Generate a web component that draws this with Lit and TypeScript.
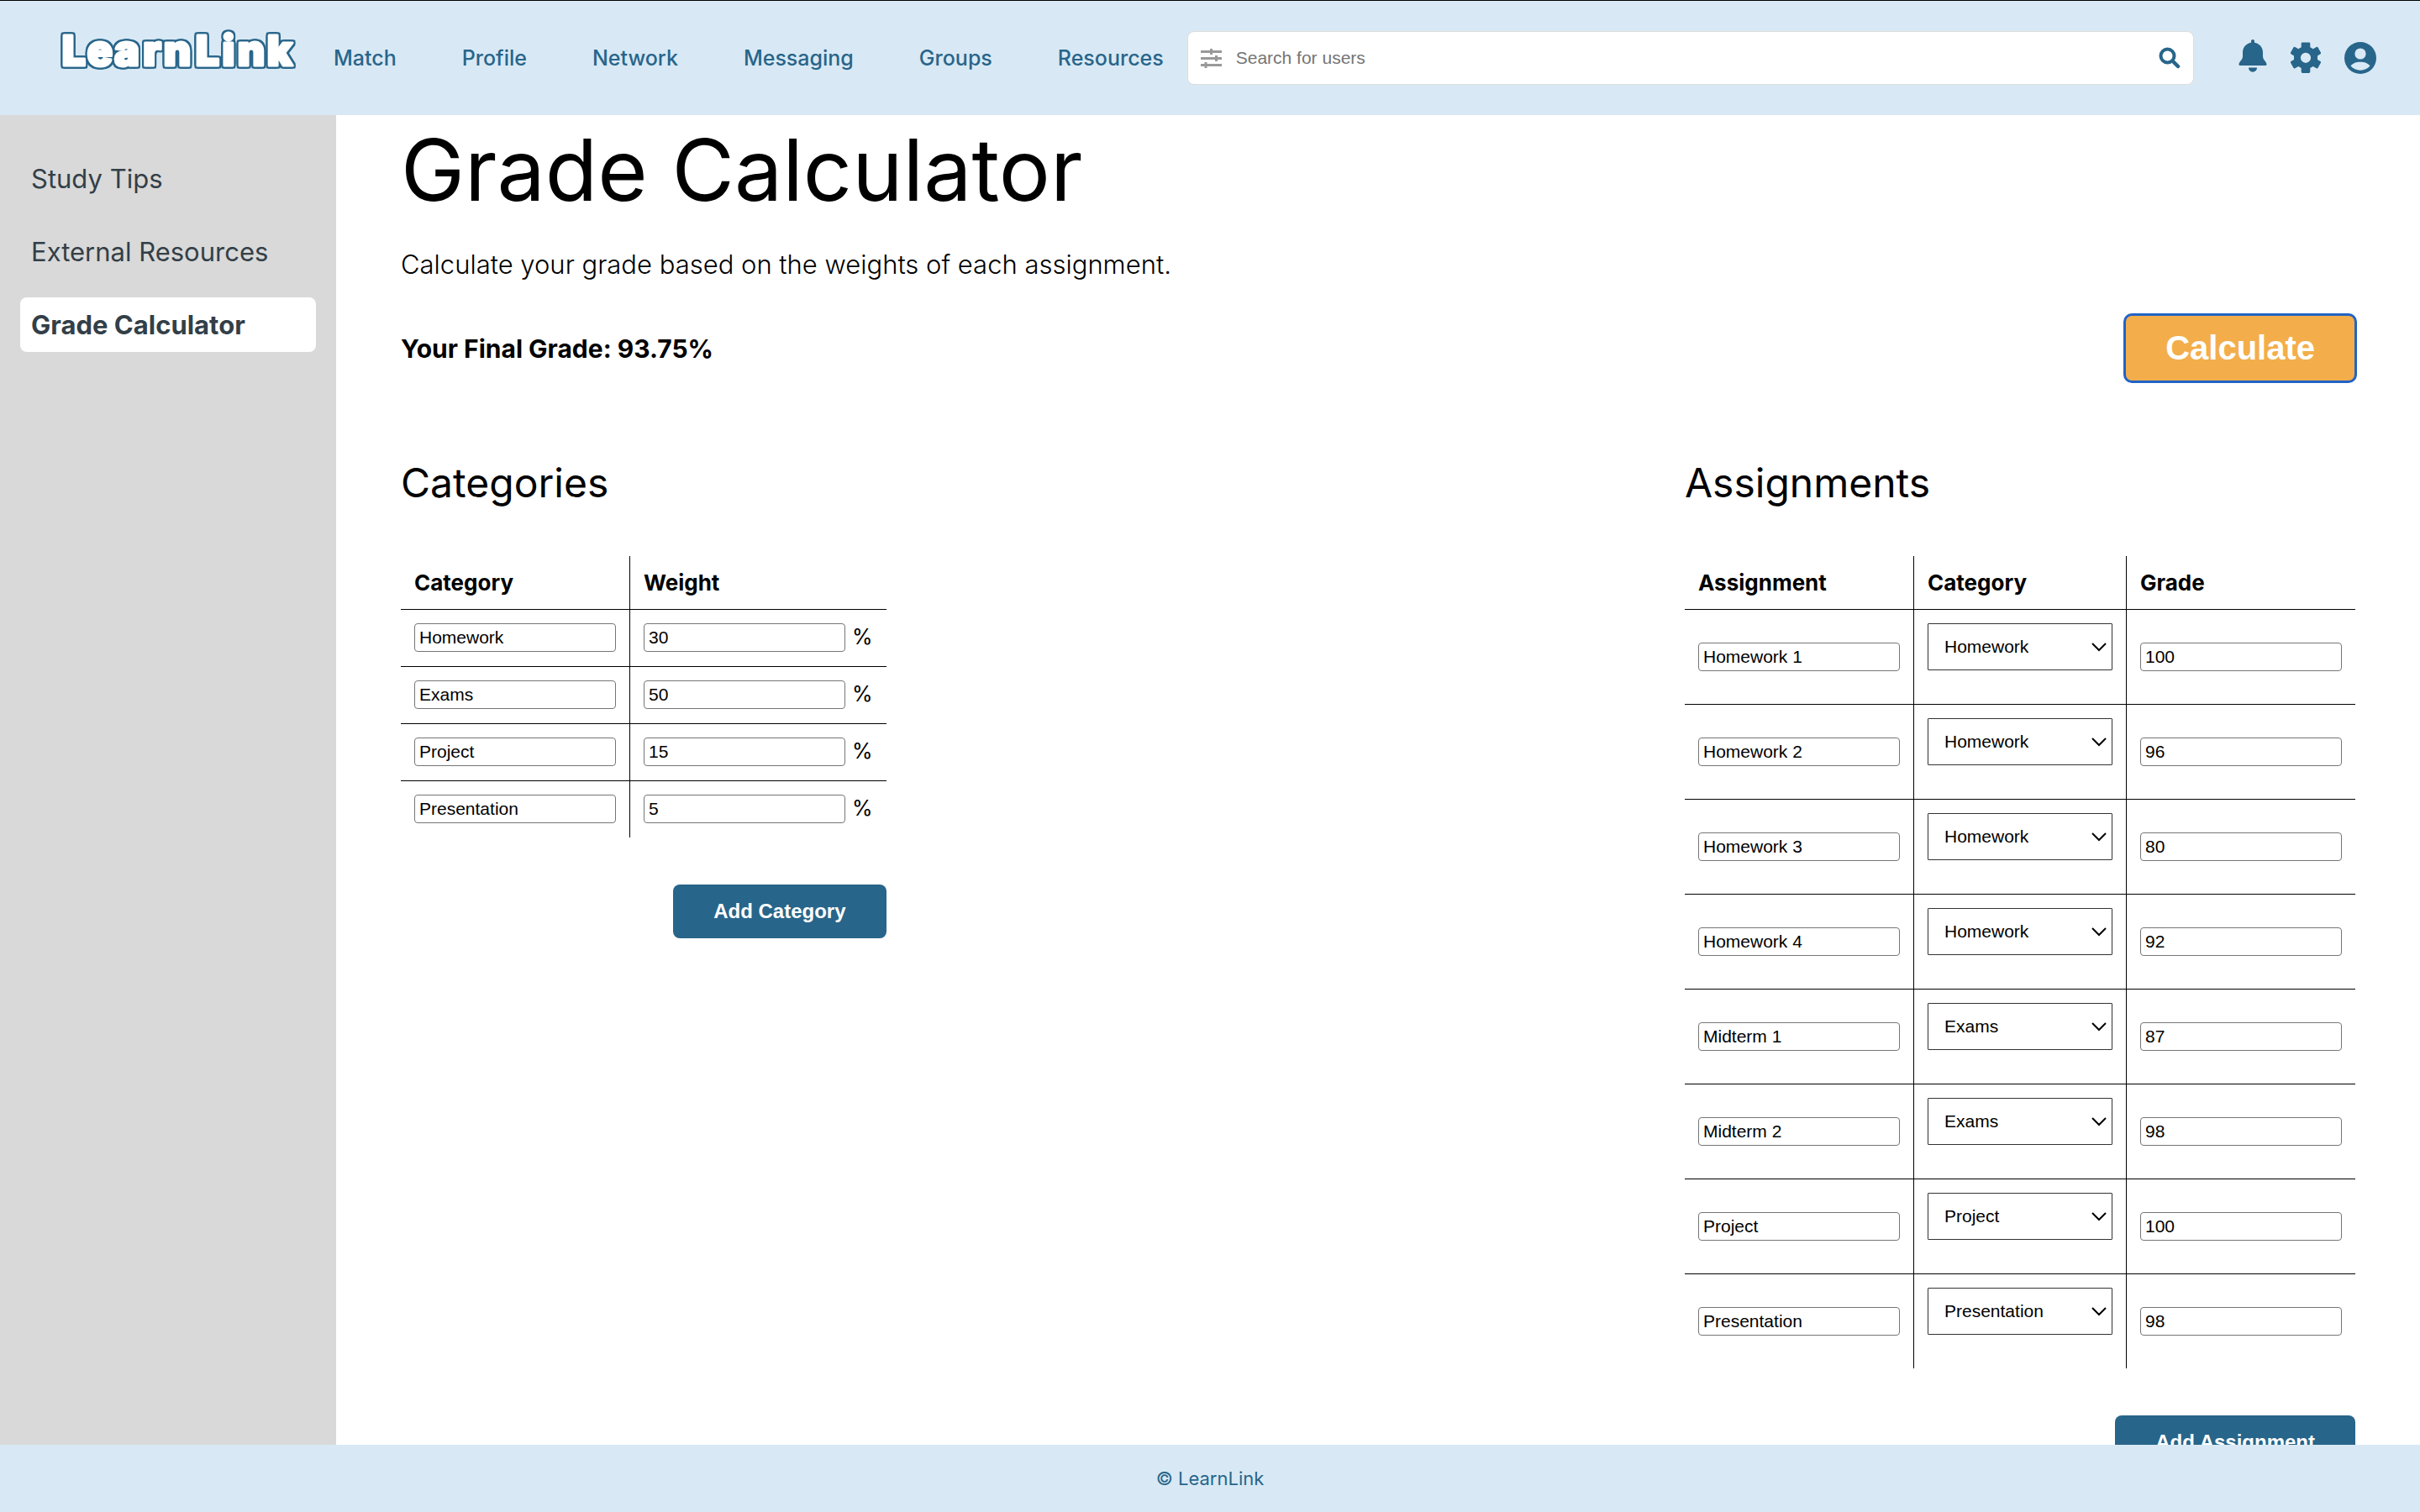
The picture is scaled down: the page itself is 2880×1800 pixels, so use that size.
import { LitElement, html, svg, css } from "lit";
import { customElement, state } from "lit/decorators.js";

interface Category {
  name: string;
  weight: number;
}

interface Assignment {
  name: string;
  category: string;
  grade: number;
}

const icons = {
  filter: svg`<path d="M0 4.500h25M0 12.500h25M0 20.500h25M12.500 1v7M18.500 9v7M6 17v7" fill="none" stroke="#999" stroke-width="3"/>`,
  search: svg`<circle cx="10.500" cy="10.500" r="8" fill="none" stroke="currentColor" stroke-width="4"/><path d="M17.500 17.500l5.500 5.500" stroke="currentColor" stroke-width="4.500" stroke-linecap="round"/>`,
  bell: svg`<path d="M17 0c1.200 0 2 .9 2 2.200v1.600C25.300 5 29 9.500 29 15.500v4.500c0 4.500 4.500 6.500 4.500 9.500 0 1-.7 1.500-1.500 1.500H2c-.8 0-1.500-.5-1.500-1.500 0-3 4.500-5 4.500-9.500v-4.500C5 9.500 8.700 5 15 3.800V2.200C15 .9 15.800 0 17 0zM12 33.500h10c0 3-2.200 5.200-5 5.200s-5-2.200-5-5.200z" fill="currentColor"/>`,
  gear: svg`<path fill-rule="evenodd" d="M14.200.6h7.600c.9 0 1.500.5 1.500 1.400v4.300c1.300.5 2.400 1.200 3.400 2l4-2.300c.7-.4 1.400-.2 1.900.5l3.300 6c.4.700.2 1.400-.5 1.800L32 16.500v4.500l3.400 2c.7.400.9 1.100.5 1.800l-3.300 6c-.5.700-1.200.9-1.900.5l-4-2.300c-1 .8-2.100 1.500-3.400 2v4.500c0 .9-.6 1.400-1.500 1.400h-7.600c-.9 0-1.500-.5-1.500-1.400V31c-1.300-.5-2.400-1.200-3.400-2l-4 2.300c-.7.400-1.400.2-1.900-.5l-3.300-6c-.4-.7-.2-1.400.5-1.800L4 21v-4.500l-3.400-2.200c-.7-.4-.9-1.100-.5-1.800l3.300-6c.5-.7 1.200-.9 1.900-.5l4 2.300c1-.8 2.100-1.500 3.400-2V2c0-.9.600-1.400 1.500-1.400zM18 12.700a6.100 6.100 0 1 0 0 12.200 6.100 6.100 0 0 0 0-12.200z" fill="currentColor"/>`,
  user: svg`<circle cx="19" cy="19" r="19" fill="currentColor"/><circle cx="19" cy="14" r="6.600" fill="#d8e9f5"/><path d="M7.500 28.500c3-3.600 6.500-4.800 11.500-4.800s8.500 1.200 11.500 4.800c-3 3.400-6.900 5.200-11.500 5.200s-8.500-1.800-11.500-5.200z" fill="#d8e9f5"/>`,
  chevron: svg`<path d="M1 2l8 8 8-8" fill="none" stroke="#000" stroke-width="2"/>`,
};

/* Letters of the bubble wordmark with the centre of each one. */
const wordmark: [string, number][] = [
  ["L", 16],
  ["e", 47],
  ["a", 79],
  ["r", 109],
  ["n", 139],
  ["L", 175],
  ["i", 200],
  ["n", 227],
  ["k", 261],
];

@customElement("app-root")
export class AppRoot extends LitElement {
  static styles = css`
    :host {
      display: flex;
      flex-direction: column;
      height: 100vh;
      overflow: hidden;
      box-sizing: border-box;
      border-top: 1px solid #000;
      background: #fff;
      color: #000;
      font-family: Inter, "Liberation Sans", sans-serif;
      font-size: 26px;
    }
    * {
      box-sizing: border-box;
    }
    h1, h2, p {
      margin: 0;
      font-weight: 400;
    }
    a {
      color: inherit;
      text-decoration: none;
    }
    svg {
      display: block;
    }
    .header {
      display: flex;
      flex: none;
      align-items: center;
      height: 136px;
      padding: 0 52px 0 72px;
      background: #d8e9f5;
      color: #28658a;
    }
    .logo {
      flex: none;
      width: 325px;
      padding-bottom: 18px;
    }
    .logo svg {
      overflow: visible;
    }
    .logo text {
      fill: #fff;
      stroke: #fff;
      stroke-width: 3px;
      stroke-linejoin: round;
      text-anchor: middle;
      font-size: 50px;
      font-weight: 900;
      filter: drop-shadow(2px 0 0 #28658a) drop-shadow(-2px 0 0 #28658a)
        drop-shadow(0 2px 0 #28658a) drop-shadow(0 -2px 0 #28658a);
    }
    .nav {
      display: flex;
      gap: 78px;
      font-size: 25px;
      font-weight: 500;
    }
    .search {
      display: flex;
      flex: 1;
      align-items: center;
      gap: 16px;
      height: 64px;
      margin-left: 28px;
      padding: 0 15px;
      border: 1px solid #ddd;
      border-radius: 8px;
      background: #fff;
    }
    .search input {
      flex: 1;
      min-width: 0;
      padding: 0;
      border: 0;
      outline: 0;
      background: none;
      font: 21px "Liberation Sans", Arial, sans-serif;
    }
    .search input::placeholder {
      color: #757575;
    }
    .icon-button {
      padding: 0;
      border: 0;
      background: none;
      color: #28658a;
    }
    .actions {
      display: flex;
      align-items: center;
      gap: 28px;
      margin-left: 53px;
    }
    .body {
      display: flex;
      flex: 1;
      min-height: 0;
    }
    .sidebar {
      display: flex;
      flex: none;
      flex-direction: column;
      gap: 22px;
      width: 400px;
      padding: 43px 24px;
      background: #d9d9d9;
      color: #333f48;
      font-size: 31px;
    }
    .side-link {
      padding: 0 13px;
      border-radius: 8px;
      line-height: 65px;
    }
    .side-link.active {
      background: #fff;
      font-weight: 700;
    }
    .main {
      flex: 1;
      min-width: 0;
      overflow: hidden;
      padding: 0 77px;
    }
    .title {
      font-size: 102px;
      line-height: 130px;
    }
    .subtitle {
      margin-top: 28px;
      font-size: 31px;
      font-weight: 300;
      line-height: 40px;
    }
    .result {
      display: flex;
      align-items: center;
      justify-content: space-between;
      margin-top: 40px;
    }
    .grade {
      font-size: 30px;
      font-weight: 700;
    }
    .calculate {
      height: 79px;
      padding: 0 48px;
      border: 0;
      border-radius: 8px;
      outline: 3px solid #2163c6;
      outline-offset: -1px;
      background: #f3ae4b;
      color: #fff;
      font: 700 40px "Liberation Sans", Arial, sans-serif;
    }
    .columns {
      display: flex;
      align-items: flex-start;
      justify-content: space-between;
      margin-top: 91px;
    }
    .panel {
      display: flex;
      flex-direction: column;
      align-items: flex-end;
    }
    .panel-title {
      align-self: flex-start;
      margin-bottom: 57px;
      font-size: 48px;
      line-height: 60px;
    }
    .table {
      border-collapse: collapse;
    }
    .table th {
      height: 63px;
      padding: 0 16px;
      font-weight: 700;
      text-align: left;
    }
    .table td {
      height: 68px;
      padding: 16px;
    }
    .table tbody td {
      border-top: 1px solid #000;
    }
    .table th + th,
    .table td + td {
      border-left: 1px solid #000;
    }
    .field {
      display: block;
      width: 240px;
      height: 34px;
      padding: 0 5px;
      border: 1px solid #767676;
      border-radius: 4px;
      background: #fff;
      color: #000;
      font: 21px "Liberation Sans", Arial, sans-serif;
    }
    .weight {
      display: flex;
      align-items: flex-start;
      gap: 8px;
      font-size: 25px;
      line-height: 32px;
    }
    .select-wrap {
      display: grid;
      align-items: center;
      margin-bottom: 24px;
    }
    .select-wrap > * {
      grid-area: 1 / 1;
    }
    .select-wrap svg {
      justify-self: end;
      margin-right: 7px;
      pointer-events: none;
    }
    .select {
      width: 220px;
      height: 56px;
      padding: 0 19px;
      border: 1px solid #333;
      border-radius: 1px;
      appearance: none;
      background: #fff;
      color: #000;
      font: 21px "Liberation Sans", Arial, sans-serif;
    }
    .add {
      height: 64px;
      margin-top: 56px;
      padding: 0 48px;
      border: 0;
      border-radius: 8px;
      background: #28658a;
      color: #fff;
      font: 700 24px "Liberation Sans", Arial, sans-serif;
    }
    .footer {
      display: flex;
      flex: none;
      align-items: center;
      justify-content: center;
      height: 80px;
      background: #d8e9f5;
      color: #28658a;
      font-size: 22px;
    }
  `;

  @state() private categories: Category[] = [
    { name: "Homework", weight: 30 },
    { name: "Exams", weight: 50 },
    { name: "Project", weight: 15 },
    { name: "Presentation", weight: 5 },
  ];

  @state() private assignments: Assignment[] = [
    { name: "Homework 1", category: "Homework", grade: 100 },
    { name: "Homework 2", category: "Homework", grade: 96 },
    { name: "Homework 3", category: "Homework", grade: 80 },
    { name: "Homework 4", category: "Homework", grade: 92 },
    { name: "Midterm 1", category: "Exams", grade: 87 },
    { name: "Midterm 2", category: "Exams", grade: 98 },
    { name: "Project", category: "Project", grade: 100 },
    { name: "Presentation", category: "Presentation", grade: 98 },
  ];

  @state() private finalGrade = "93.75";

  private calculate() {
    let total = 0;
    let weights = 0;
    for (const c of this.categories) {
      const grades = this.assignments.filter((a) => a.category === c.name).map((a) => a.grade);
      if (!grades.length) continue;
      total += (grades.reduce((sum, g) => sum + g, 0) / grades.length) * c.weight;
      weights += c.weight;
    }
    this.finalGrade = weights ? (total / weights).toFixed(2) : "0";
  }

  private updateCategory(index: number, change: Partial<Category>) {
    this.categories = this.categories.map((c, i) => (i === index ? { ...c, ...change } : c));
  }

  private updateAssignment(index: number, change: Partial<Assignment>) {
    this.assignments = this.assignments.map((a, i) => (i === index ? { ...a, ...change } : a));
  }

  private addCategory() {
    this.categories = [...this.categories, { name: "", weight: 0 }];
  }

  private addAssignment() {
    const category = this.categories[0]?.name ?? "";
    this.assignments = [...this.assignments, { name: "", category, grade: 0 }];
  }

  private renderHeader() {
    const links = ["Match", "Profile", "Network", "Messaging", "Groups", "Resources"];
    return html`
      <header class="header">
        <a class="logo" href="#" aria-label="LearnLink">
          <svg width="284" height="60" viewBox="0 0 284 60">
            ${wordmark.map(([letter, x]) => svg`<text x=${x} y="48">${letter}</text>`)}
          </svg>
        </a>
        <nav class="nav">${links.map((l) => html`<a href="#">${l}</a>`)}</nav>
        <div class="search">
          <svg width="26" height="25" viewBox="0 0 26 25">${icons.filter}</svg>
          <input type="text" placeholder="Search for users" aria-label="Search for users" />
          <button class="icon-button" aria-label="Search">
            <svg width="26" height="26" viewBox="0 0 26 26">${icons.search}</svg>
          </button>
        </div>
        <div class="actions">
          <button class="icon-button" aria-label="Notifications">
            <svg width="34" height="44" viewBox="0 0 34 44">${icons.bell}</svg>
          </button>
          <button class="icon-button" aria-label="Settings">
            <svg width="36" height="38" viewBox="0 0 36 38">${icons.gear}</svg>
          </button>
          <button class="icon-button" aria-label="Account">
            <svg width="38" height="38" viewBox="0 0 38 38">${icons.user}</svg>
          </button>
        </div>
      </header>
    `;
  }

  private renderCategories() {
    return html`
      <section class="panel">
        <h2 class="panel-title">Categories</h2>
        <table class="table">
          <thead>
            <tr><th>Category</th><th>Weight</th></tr>
          </thead>
          <tbody>
            ${this.categories.map(
              (c, i) => html`
                <tr>
                  <td>
                    <input class="field" type="text" aria-label="Category name" .value=${c.name}
                      @change=${(e: Event) => this.updateCategory(i, { name: (e.target as HTMLInputElement).value })} />
                  </td>
                  <td>
                    <label class="weight">
                      <input class="field" type="text" aria-label="Weight" .value=${String(c.weight)}
                        @change=${(e: Event) => this.updateCategory(i, { weight: Number((e.target as HTMLInputElement).value) })} />
                      %
                    </label>
                  </td>
                </tr>
              `
            )}
          </tbody>
        </table>
        <button class="add" @click=${this.addCategory}>Add Category</button>
      </section>
    `;
  }

  private renderAssignments() {
    return html`
      <section class="panel">
        <h2 class="panel-title">Assignments</h2>
        <table class="table">
          <thead>
            <tr><th>Assignment</th><th>Category</th><th>Grade</th></tr>
          </thead>
          <tbody>
            ${this.assignments.map(
              (a, i) => html`
                <tr>
                  <td>
                    <input class="field" type="text" aria-label="Assignment name" .value=${a.name}
                      @change=${(e: Event) => this.updateAssignment(i, { name: (e.target as HTMLInputElement).value })} />
                  </td>
                  <td>
                    <div class="select-wrap">
                      <select class="select" aria-label="Assignment category"
                        @change=${(e: Event) => this.updateAssignment(i, { category: (e.target as HTMLSelectElement).value })}>
                        ${this.categories.map(
                          (c) => html`<option ?selected=${c.name === a.category}>${c.name}</option>`
                        )}
                      </select>
                      <svg width="18" height="12" viewBox="0 0 18 12">${icons.chevron}</svg>
                    </div>
                  </td>
                  <td>
                    <input class="field" type="text" aria-label="Grade" .value=${String(a.grade)}
                      @change=${(e: Event) => this.updateAssignment(i, { grade: Number((e.target as HTMLInputElement).value) })} />
                  </td>
                </tr>
              `
            )}
          </tbody>
        </table>
        <button class="add" @click=${this.addAssignment}>Add Assignment</button>
      </section>
    `;
  }

  render() {
    return html`
      ${this.renderHeader()}
      <div class="body">
        <nav class="sidebar">
          <a class="side-link" href="#">Study Tips</a>
          <a class="side-link" href="#">External Resources</a>
          <a class="side-link active" href="#">Grade Calculator</a>
        </nav>
        <main class="main">
          <h1 class="title">Grade Calculator</h1>
          <p class="subtitle">Calculate your grade based on the weights of each assignment.</p>
          <div class="result">
            <p class="grade">Your Final Grade: ${this.finalGrade}%</p>
            <button class="calculate" @click=${this.calculate}>Calculate</button>
          </div>
          <div class="columns">${this.renderCategories()}${this.renderAssignments()}</div>
        </main>
      </div>
      <footer class="footer">© LearnLink</footer>
    `;
  }
}
